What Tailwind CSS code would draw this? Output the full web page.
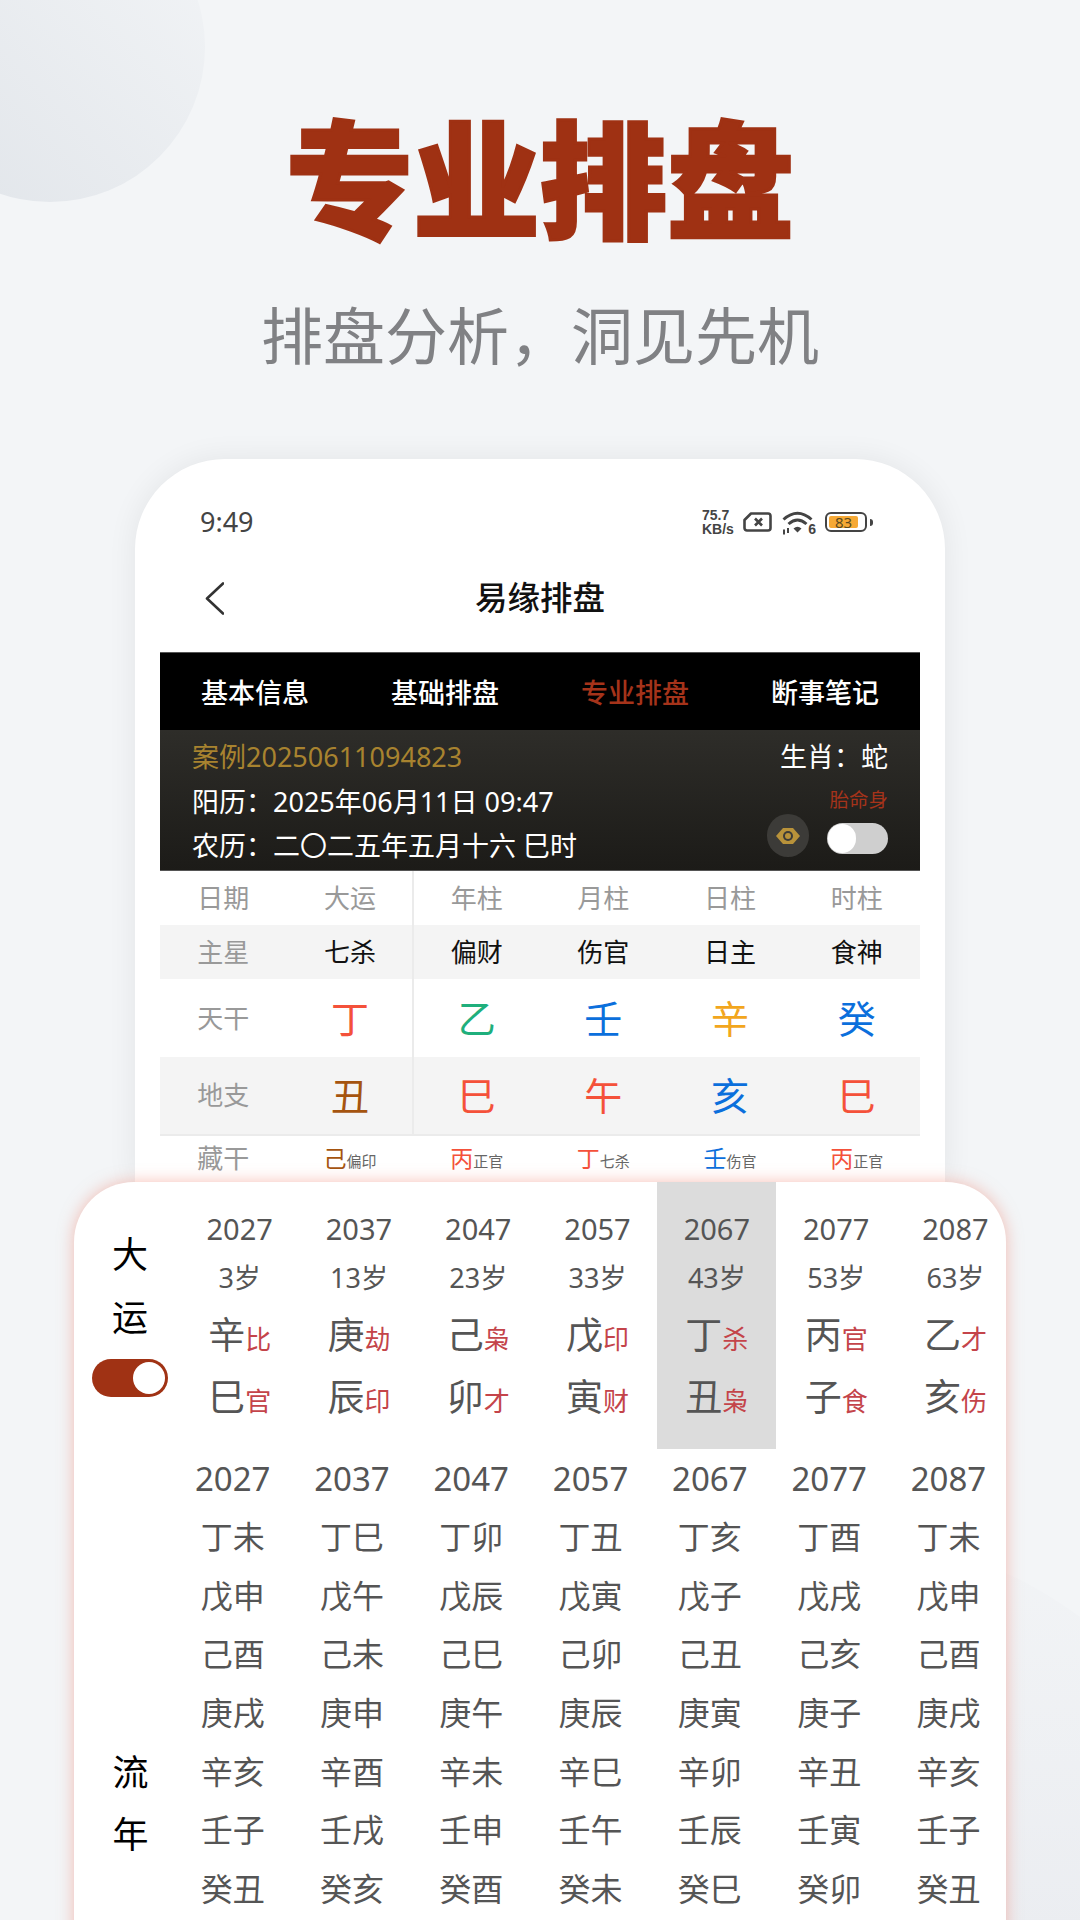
<!DOCTYPE html>
<html lang="zh-CN">
<head>
    <meta charset="UTF-8">
    <meta name="viewport" content="width=device-width, initial-scale=1.0">
    <title>专业排盘</title>
    <script src="https://cdn.jsdelivr.net/npm/@tailwindcss/browser@4"></script>
</head>
<body class="bg-[#f3f5f7] overflow-hidden font-['Noto_Sans','Noto_Sans_CJK_SC',sans-serif]">
<div class="relative w-[1080px] h-[1920px] overflow-hidden">
    <!-- background circles -->
    <div class="absolute left-[-105px] top-[-108px] w-[310px] h-[310px] rounded-full bg-linear-to-bl from-[#f3f5f7] to-[#e0e4e9]"></div>
    <div class="absolute left-[440px] top-[1537px] w-[800px] h-[800px] rounded-full bg-linear-to-b from-[#f2f4f6] to-[#e4e6ec]"></div>

    <!-- Heading -->
    <div class="relative flex flex-col items-center">
        <h1 class="mt-[105px] h-[150px] text-[127px] leading-[150px] font-black text-[#9f3113] [-webkit-text-stroke:3px_#9f3113]">专业排盘</h1>
        <p class="mt-[41px] h-[80px] text-[62px] leading-[80px] text-[#808184]">排盘分析，洞见先机</p>
    </div>

    <!-- Phone -->
    <div class="relative mx-[135px] mt-[83px] h-[723px] overflow-hidden rounded-t-[90px] bg-white shadow-[0_0_30px_rgba(0,0,0,0.07)]">
        <!-- Status bar -->
        <div class="mt-[33px] h-[60px] pl-[65px] pr-[72px] flex items-center justify-between text-[#444]">
            <span class="text-[27px]">9:49</span>
            <div class="flex items-center">
                <div class="w-[32px] font-bold text-[14px] leading-[14px] font-['Liberation_Sans',sans-serif]">75.7<br>KB/s</div>
                <svg class="ml-[9px]" width="29" height="20" viewBox="0 0 29 20" fill="none" stroke="#444" stroke-width="2.6" stroke-linejoin="round"><path d="M8 1.500H25a2.500 2.500 0 0 1 2.500 2.500V16a2.500 2.500 0 0 1-2.500 2.500H4A2.500 2.500 0 0 1 1.500 16V8Z"/><path d="M12 6.500l7 7M19 6.500l-7 7"/></svg>
                <div class="relative ml-[10px] w-[32px] h-[25px]">
                    <svg class="absolute left-0 top-0" width="32" height="25" viewBox="0 0 32 25" fill="none" stroke="#444" stroke-width="3"><path d="M1.500 9.500Q15.500-3 29.500 9.500"/><path d="M6.500 14Q15.500 6 24.500 14"/><path d="M11.500 18.500Q15.500 15 19.500 18.500L15.500 22.500Z" fill="#444" stroke="none"/><path d="M2 19.500v5M6 18v5" stroke-width="2"/></svg>
                    <span class="absolute right-[-2px] bottom-[-1px] text-[14px] leading-[13px] font-bold font-['Liberation_Sans',sans-serif]">6</span>
                </div>
                <div class="ml-[11px] flex items-center">
                    <div class="w-[42px] h-[20px] rounded-[6px] border-2 border-[#444] p-[2px] flex">
                        <div class="w-[29px] h-full rounded-[2px] bg-[#f6a935] flex items-center justify-center text-[15px] leading-[13px] text-[#5a4a20]">83</div>
                    </div>
                    <div class="ml-[3px] w-[3px] h-[7px] rounded-r-sm bg-[#444]"></div>
                </div>
            </div>
        </div>
        <!-- Header -->
        <div class="relative h-[92px] flex items-center justify-center">
            <svg class="absolute left-[70px] top-[30px]" width="19" height="33" viewBox="0 0 19 33" fill="none" stroke="#333" stroke-width="2.600" stroke-linecap="round" stroke-linejoin="round"><path d="M18 1.500 2 16.500l16 15"/></svg>
            <span class="text-[32.500px] font-medium text-[#111]">易缘排盘</span>
        </div>
        <!-- Chart -->
        <div class="mx-[25px] mt-[8px]">
            <div class="grid grid-cols-4 h-[78px] pt-[4px] bg-black border-t border-[#555] text-[27px] font-medium text-white">
                <div class="flex items-center justify-center">基本信息</div>
                <div class="flex items-center justify-center">基础排盘</div>
                <div class="flex items-center justify-center text-[#a5331a]">专业排盘</div>
                <div class="flex items-center justify-center">断事笔记</div>
            </div>
            <div class="h-[141px] px-[32px] pt-[5px] flex justify-between bg-linear-to-b from-[#2e2d29] to-[#1c1b18] border-b border-[#555] text-[27px] text-white">
                <div class="flex flex-col leading-[44.500px]">
                    <span class="text-[#a8832f]">案例20250611094823</span>
                    <span>阳历：2025年06月11日 09:47</span>
                    <span>农历：二〇二五年五月十六 巳时</span>
                </div>
                <div class="flex flex-col items-end">
                    <span class="h-[44px] leading-[44px]">生肖：蛇</span>
                    <span class="h-[35px] pt-[11px] text-[19.500px] leading-[20px] text-[#a5331a]">胎命身</span>
                    <div class="flex items-center gap-[18px]">
                        <div class="w-[42px] h-[43px] rounded-full bg-[#3c3b38] flex items-center justify-center">
                            <svg width="26" height="20" viewBox="0 0 26 20"><path d="M1 10 8 2h10l7 8-7 8H8Z" fill="#b8923a"/><circle cx="13" cy="10" r="5" fill="#3c3b38"/><circle cx="13" cy="10" r="3" fill="#b8923a"/></svg>
                        </div>
                        <div class="mt-[6px] w-[61px] h-[31px] rounded-full bg-[#cfcfcf] flex items-center pl-[1px]">
                            <div class="w-[28px] h-[29px] rounded-full bg-white"></div>
                        </div>
                    </div>
                </div>
            </div>
            <div class="relative text-[26px] text-[#999]">
                <div class="absolute left-[252px] top-0 w-[2px] h-[263px] bg-[#ebebeb]"></div>
                <div class="grid grid-cols-6 place-items-center h-[54px]">
                    <span>日期</span><span>大运</span><span>年柱</span><span>月柱</span><span>日柱</span><span>时柱</span>
                </div>
                <div class="grid grid-cols-6 place-items-center h-[54px] bg-[#f4f4f4] text-[#111]">
                    <span class="text-[#999]">主星</span><span>七杀</span><span>偏财</span><span>伤官</span><span>日主</span><span>食神</span>
                </div>
                <div class="grid grid-cols-6 place-items-center h-[78px] text-[38px]">
                    <span class="text-[26px]">天干</span>
                    <span class="text-[#f4513a]">丁</span>
                    <span class="text-[#1faf7c]">乙</span>
                    <span class="text-[#0b6fdc]">壬</span>
                    <span class="text-[#f2a61d]">辛</span>
                    <span class="text-[#0b6fdc]">癸</span>
                </div>
                <div class="grid grid-cols-6 place-items-center h-[77px] bg-[#f4f4f4] text-[38px]">
                    <span class="text-[26px]">地支</span>
                    <span class="text-[#a5540f]">丑</span>
                    <span class="text-[#f4513a]">巳</span>
                    <span class="text-[#f4513a]">午</span>
                    <span class="text-[#0b6fdc]">亥</span>
                    <span class="text-[#f4513a]">巳</span>
                </div>
                <div class="grid grid-cols-6 place-items-center h-[46px] border-t-2 border-[#ebebeb] text-[15px] text-[#666]">
                    <span class="text-[26px] text-[#999]">藏干</span>
                    <div class="flex items-baseline"><span class="text-[23px] text-[#a5540f]">己</span>偏印</div>
                    <div class="flex items-baseline"><span class="text-[23px] text-[#f4513a]">丙</span>正官</div>
                    <div class="flex items-baseline"><span class="text-[23px] text-[#f4513a]">丁</span>七杀</div>
                    <div class="flex items-baseline"><span class="text-[23px] text-[#0b6fdc]">壬</span>伤官</div>
                    <div class="flex items-baseline"><span class="text-[23px] text-[#f4513a]">丙</span>正官</div>
                </div>
            </div>
        </div>
    </div>

    <!-- Bottom card -->
    <div class="relative mx-[74px] h-[760px] overflow-hidden rounded-t-[60px] bg-white shadow-[0_0_16px_rgba(240,130,110,0.5)] text-[#555]">
        <!-- Da yun -->
        <div class="flex h-[267px]">
            <div class="shrink-0 w-[106px] pl-[6px] pt-[41px] flex flex-col items-center text-[36px] leading-[63px] text-black">
                <span>大</span>
                <span>运</span>
                <div class="mt-[10px] w-[76px] h-[38px] rounded-full bg-[#a03214] flex items-center justify-end pr-[3px]">
                    <div class="w-[32px] h-[32px] rounded-full bg-white"></div>
                </div>
            </div>
            <div class="shrink-0 w-[119.300px] pt-[23px] grid grid-rows-[48px_50px_64px_60px] justify-items-center items-center text-[29px]">
                <span>2027</span><span class="text-[27px]">3岁</span>
                <div class="flex items-baseline text-[37px]">辛<span class="text-[26px] text-[#c4444a]">比</span></div>
                <div class="flex items-baseline text-[37px]">巳<span class="text-[26px] text-[#c4444a]">官</span></div>
            </div>
            <div class="shrink-0 w-[119.300px] pt-[23px] grid grid-rows-[48px_50px_64px_60px] justify-items-center items-center text-[29px]">
                <span>2037</span><span class="text-[27px]">13岁</span>
                <div class="flex items-baseline text-[37px]">庚<span class="text-[26px] text-[#c4444a]">劫</span></div>
                <div class="flex items-baseline text-[37px]">辰<span class="text-[26px] text-[#c4444a]">印</span></div>
            </div>
            <div class="shrink-0 w-[119.300px] pt-[23px] grid grid-rows-[48px_50px_64px_60px] justify-items-center items-center text-[29px]">
                <span>2047</span><span class="text-[27px]">23岁</span>
                <div class="flex items-baseline text-[37px]">己<span class="text-[26px] text-[#c4444a]">枭</span></div>
                <div class="flex items-baseline text-[37px]">卯<span class="text-[26px] text-[#c4444a]">才</span></div>
            </div>
            <div class="shrink-0 w-[119.300px] pt-[23px] grid grid-rows-[48px_50px_64px_60px] justify-items-center items-center text-[29px]">
                <span>2057</span><span class="text-[27px]">33岁</span>
                <div class="flex items-baseline text-[37px]">戊<span class="text-[26px] text-[#c4444a]">印</span></div>
                <div class="flex items-baseline text-[37px]">寅<span class="text-[26px] text-[#c4444a]">财</span></div>
            </div>
            <div class="shrink-0 w-[119.300px] pt-[23px] grid grid-rows-[48px_50px_64px_60px] justify-items-center items-center text-[29px] bg-[#dcdcdc]">
                <span>2067</span><span class="text-[27px]">43岁</span>
                <div class="flex items-baseline text-[37px]">丁<span class="text-[26px] text-[#c4444a]">杀</span></div>
                <div class="flex items-baseline text-[37px]">丑<span class="text-[26px] text-[#c4444a]">枭</span></div>
            </div>
            <div class="shrink-0 w-[119.300px] pt-[23px] grid grid-rows-[48px_50px_64px_60px] justify-items-center items-center text-[29px]">
                <span>2077</span><span class="text-[27px]">53岁</span>
                <div class="flex items-baseline text-[37px]">丙<span class="text-[26px] text-[#c4444a]">官</span></div>
                <div class="flex items-baseline text-[37px]">子<span class="text-[26px] text-[#c4444a]">食</span></div>
            </div>
            <div class="shrink-0 w-[119.300px] pt-[23px] grid grid-rows-[48px_50px_64px_60px] justify-items-center items-center text-[29px]">
                <span>2087</span><span class="text-[27px]">63岁</span>
                <div class="flex items-baseline text-[37px]">乙<span class="text-[26px] text-[#c4444a]">才</span></div>
                <div class="flex items-baseline text-[37px]">亥<span class="text-[26px] text-[#c4444a]">伤</span></div>
            </div>
        </div>
        <!-- Liu nian -->
        <div class="flex">
            <div class="shrink-0 w-[99px] pl-[14px] pt-[293px] flex flex-col items-center text-[36px] leading-[62px] text-black">
                <span>流</span>
                <span>年</span>
            </div>
            <div class="shrink-0 grid grid-cols-[repeat(7,119.300px)] auto-rows-[58.700px] place-items-center text-[32px]">
                <span class="text-[33px]">2027</span><span class="text-[33px]">2037</span><span class="text-[33px]">2047</span><span class="text-[33px]">2057</span><span class="text-[33px]">2067</span><span class="text-[33px]">2077</span><span class="text-[33px]">2087</span>
                <span>丁未</span><span>丁巳</span><span>丁卯</span><span>丁丑</span><span>丁亥</span><span>丁酉</span><span>丁未</span>
                <span>戊申</span><span>戊午</span><span>戊辰</span><span>戊寅</span><span>戊子</span><span>戊戌</span><span>戊申</span>
                <span>己酉</span><span>己未</span><span>己巳</span><span>己卯</span><span>己丑</span><span>己亥</span><span>己酉</span>
                <span>庚戌</span><span>庚申</span><span>庚午</span><span>庚辰</span><span>庚寅</span><span>庚子</span><span>庚戌</span>
                <span>辛亥</span><span>辛酉</span><span>辛未</span><span>辛巳</span><span>辛卯</span><span>辛丑</span><span>辛亥</span>
                <span>壬子</span><span>壬戌</span><span>壬申</span><span>壬午</span><span>壬辰</span><span>壬寅</span><span>壬子</span>
                <span>癸丑</span><span>癸亥</span><span>癸酉</span><span>癸未</span><span>癸巳</span><span>癸卯</span><span>癸丑</span>
            </div>
        </div>
    </div>
</div>
</body>
</html>
